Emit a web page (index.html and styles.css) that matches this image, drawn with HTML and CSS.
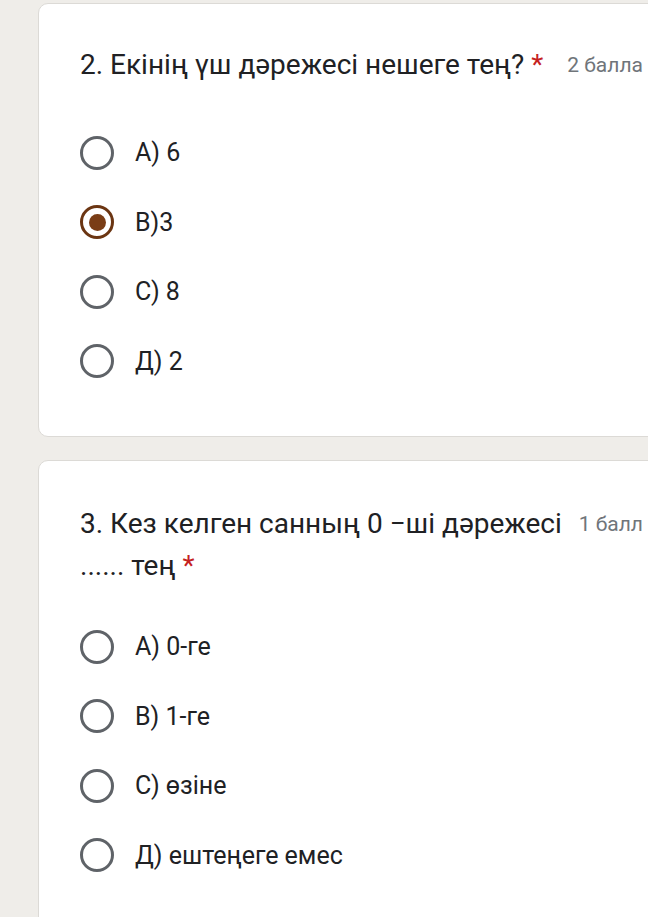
FILE: index.html
```html
<!DOCTYPE html>
<html lang="kk">
<head>
    <meta charset="UTF-8">
    <meta name="viewport" content="width=device-width, initial-scale=1.0">
    <title>Тест</title>
    <link rel="stylesheet" href="styles.css">
</head>
<body>
    <div class="card first">
        <div class="q-head">
            <div class="q-title">2. Екінің үш дәрежесі нешеге тең? <span class="req">*</span></div>
            <div class="q-points">2 балла</div>
        </div>
        <div class="options">
            <label class="option"><span class="radio"></span><span class="opt-text">А) 6</span></label>
            <label class="option"><span class="radio checked"></span><span class="opt-text">В)3</span></label>
            <label class="option"><span class="radio"></span><span class="opt-text">С) 8</span></label>
            <label class="option"><span class="radio"></span><span class="opt-text">Д) 2</span></label>
        </div>
    </div>

    <div class="card second">
        <div class="q-head">
            <div class="q-title">3. Кез келген санның 0 −ші дәрежесі ...... тең <span class="req">*</span></div>
            <div class="q-points">1 балл</div>
        </div>
        <div class="options">
            <label class="option"><span class="radio"></span><span class="opt-text">А) 0-ге</span></label>
            <label class="option"><span class="radio"></span><span class="opt-text">В) 1-ге</span></label>
            <label class="option"><span class="radio"></span><span class="opt-text">С) өзіне</span></label>
            <label class="option"><span class="radio"></span><span class="opt-text">Д) ештеңеге емес</span></label>
        </div>
    </div>
</body>
</html>
```

FILE: styles.css
```css
html, body { margin: 0; height: 100%; }
body { font-family: Roboto, "Noto Sans", Arial, sans-serif; background-color: #efede9; color: #202124; padding: 3px 0 0 38px; overflow: hidden; box-sizing: border-box; }
.card { width: 628px; box-sizing: border-box; background: #fff; border-radius: 10px; border: 1px solid #dcdad6; padding: 40px 22px 40px 41px; }
.second { margin-top: 23px; padding-top: 42px; }
.q-head { display: flex; align-items: flex-start; }
.q-title { flex: 1; font-size: 28px; line-height: 42px; }
.req { color: #c5221f; }
.q-points { flex-shrink: 0; margin-left: 6px; font-size: 21px; line-height: 42px; color: #70757a; }
.options { margin-top: 32px; }
.second .options { margin-top: 25px; }
.option { display: flex; align-items: center; height: 69.5px; }
.radio { width: 34px; height: 34px; box-sizing: border-box; border: 3.5px solid #5f6368; border-radius: 50%; display: flex; align-items: center; justify-content: center; margin-right: 21px; }
.radio.checked { border-color: #6b3512; }
.radio.checked::after { content: ""; width: 17px; height: 17px; border-radius: 50%; background: #7a3d16; }
.opt-text { font-size: 25px; }
```
